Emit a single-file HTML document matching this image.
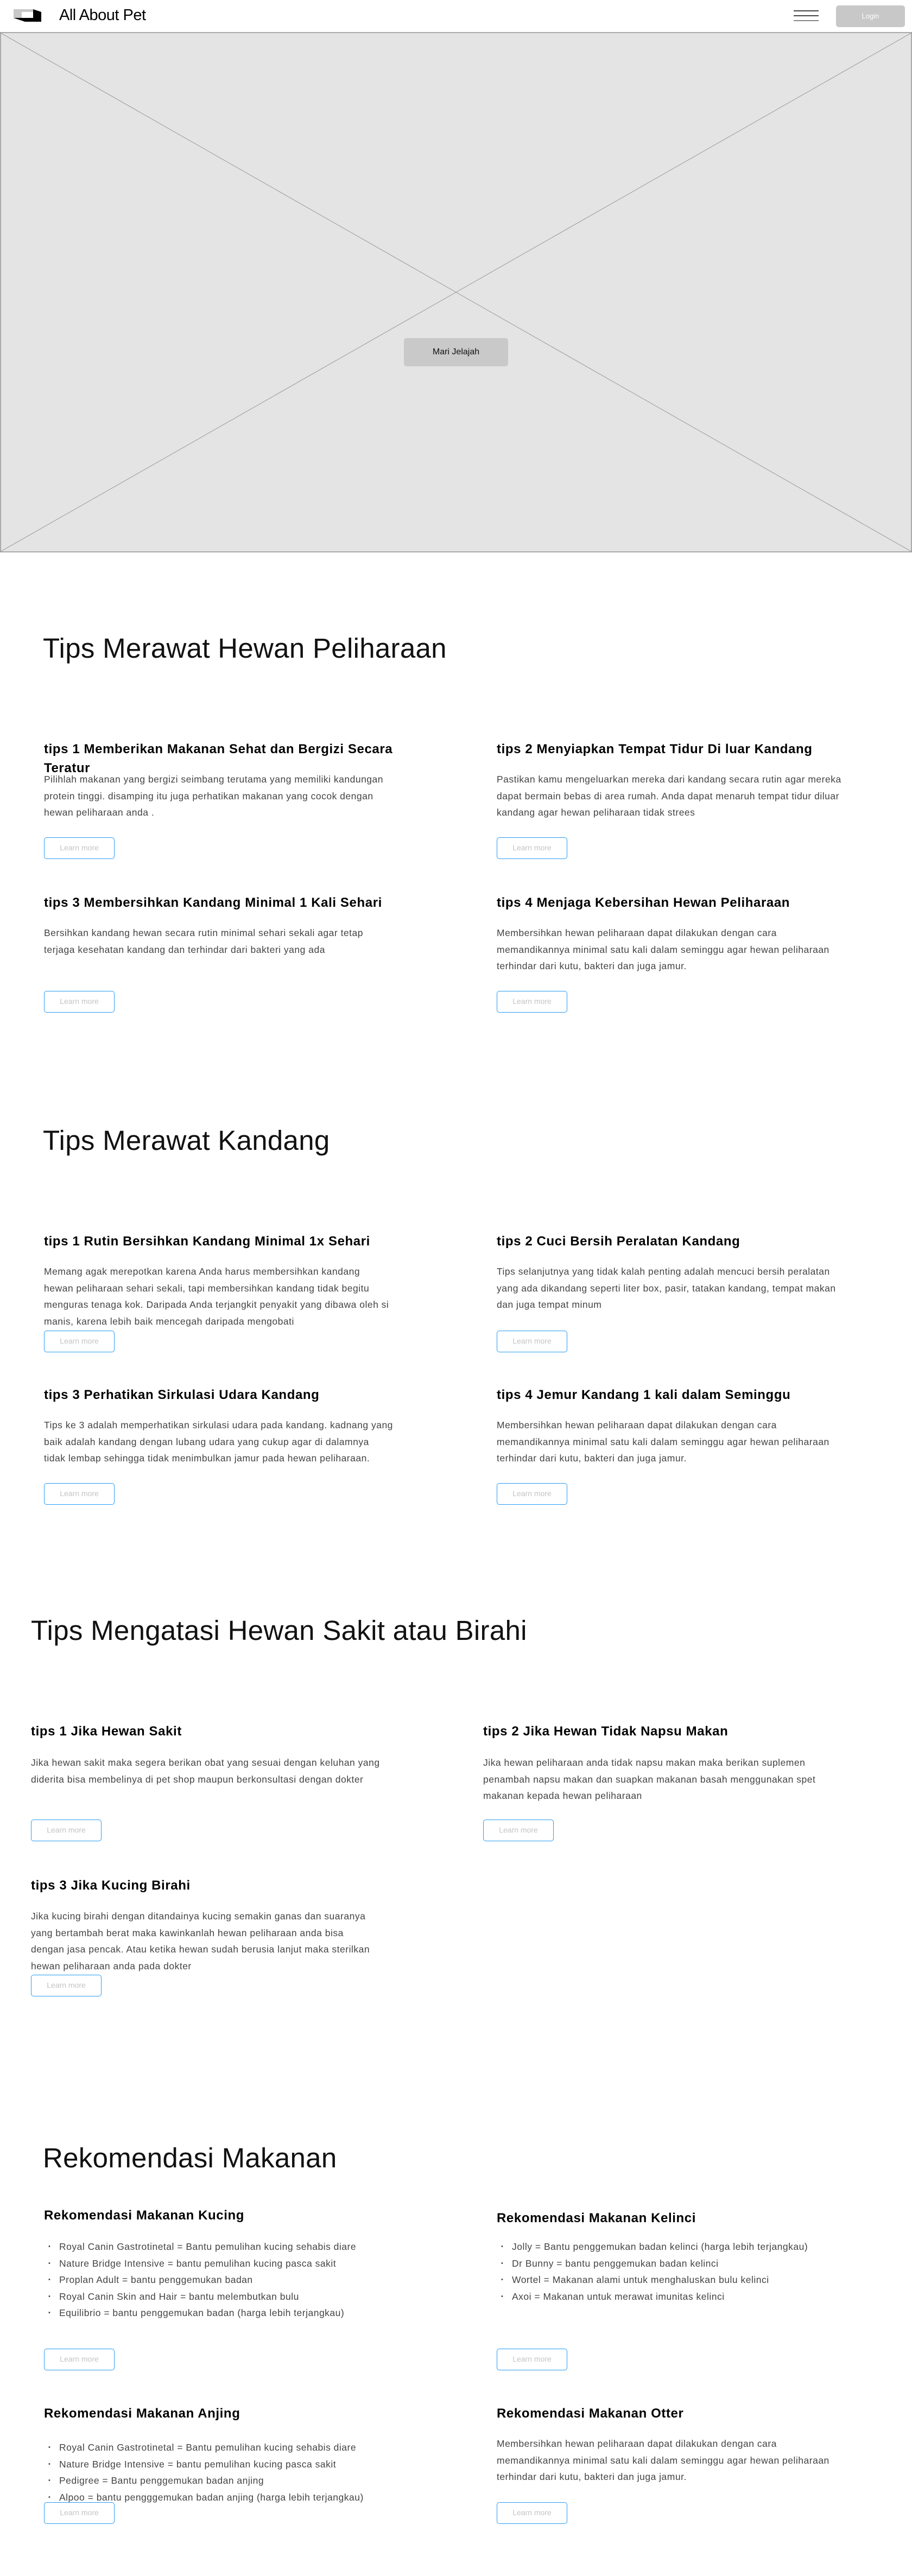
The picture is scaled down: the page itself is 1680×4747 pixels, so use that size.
<!DOCTYPE html>
<html><head><meta charset="utf-8"><style>
*{margin:0;padding:0;box-sizing:border-box}
body{width:1680px;height:4747px;position:relative;background:#fff;font-family:"Liberation Sans",sans-serif;overflow:hidden}
.a{position:absolute}
.t{position:absolute;font-size:51px;font-weight:300;color:#111;line-height:60px;white-space:nowrap;letter-spacing:0.3px}
.h{position:absolute;font-size:24px;font-weight:bold;color:#000;line-height:35px;white-space:nowrap;letter-spacing:0.6px}
.p{position:absolute;font-size:17.5px;color:#444;line-height:30.5px;white-space:nowrap;letter-spacing:0.5px}
.b{position:absolute;width:130px;height:40px;border:1.5px solid #2a9df4;border-radius:5px;color:#c4c4c4;font-size:14px;text-align:center;line-height:37px;background:#fff}
ul.p{list-style:none}
ul.p li{position:relative;padding-left:28px}
ul.p li:before{content:"•";position:absolute;left:8px;font-size:11px}
</style></head><body>
<!-- nav -->
<svg class="a" style="left:0;top:0" width="90" height="50">
<rect x="25" y="17" width="36" height="16" fill="#c8c8c8"/>
<rect x="40" y="22" width="21" height="11" fill="#fff"/>
<polygon points="25,33 61,33 61,17 76,22 76,40 46,40" fill="#000"/>
</svg>
<div class="a" style="left:109px;top:10px;font-size:29px;line-height:36px;color:#000;letter-spacing:-0.5px">All About Pet</div>
<div class="a" style="left:1462px;top:19px;width:46px;height:2px;background:#444"></div>
<div class="a" style="left:1462px;top:28px;width:46px;height:2px;background:#444"></div>
<div class="a" style="left:1462px;top:37px;width:46px;height:2px;background:#888"></div>
<div class="a" style="left:1540px;top:10px;width:127px;height:40px;background:#c8c8c8;border-radius:5px;color:#fff;font-size:13px;text-align:center;line-height:40px">Login</div>
<!-- hero -->
<div class="a" style="left:0;top:59px;width:1680px;height:959px;background:#e4e4e4;border:2px solid #aaa"></div>
<svg class="a" style="left:0;top:60px" width="1680" height="957"><line x1="0" y1="0" x2="1680" y2="957" stroke="#999" stroke-width="1"/><line x1="1680" y1="0" x2="0" y2="957" stroke="#999" stroke-width="1"/></svg>
<div class="a" style="left:744px;top:623px;width:192px;height:52px;background:#c9c9c9;border-radius:5px;font-size:16px;text-align:center;line-height:52px;color:#111">Mari Jelajah</div>

<!-- section 1 -->
<div class="t" style="left:79px;top:1165px">Tips Merawat Hewan Peliharaan</div>
<div class="h" style="left:81px;top:1363px">tips 1 Memberikan Makanan Sehat dan Bergizi Secara<br>Teratur</div>
<div class="p" style="left:81px;top:1421px">Pilihlah makanan yang bergizi seimbang terutama yang memiliki kandungan<br>protein tinggi. disamping itu juga perhatikan makanan yang cocok dengan<br>hewan peliharaan anda .</div>
<div class="b" style="left:81px;top:1543px">Learn more</div>
<div class="h" style="left:915px;top:1363px">tips 2 Menyiapkan Tempat Tidur Di luar Kandang</div>
<div class="p" style="left:915px;top:1421px">Pastikan kamu mengeluarkan mereka dari kandang secara rutin agar mereka<br>dapat bermain bebas di area rumah. Anda dapat menaruh tempat tidur diluar<br>kandang agar hewan peliharaan tidak strees</div>
<div class="b" style="left:915px;top:1543px">Learn more</div>
<div class="h" style="left:81px;top:1646px">tips 3 Membersihkan Kandang Minimal 1 Kali Sehari</div>
<div class="p" style="left:81px;top:1704px">Bersihkan kandang hewan secara rutin minimal sehari sekali agar tetap<br>terjaga kesehatan kandang dan terhindar dari bakteri yang ada</div>
<div class="b" style="left:81px;top:1826px">Learn more</div>
<div class="h" style="left:915px;top:1646px">tips 4 Menjaga Kebersihan Hewan Peliharaan</div>
<div class="p" style="left:915px;top:1704px">Membersihkan hewan peliharaan dapat dilakukan dengan cara<br>memandikannya minimal satu kali dalam seminggu agar hewan peliharaan<br>terhindar dari kutu, bakteri dan juga jamur.</div>
<div class="b" style="left:915px;top:1826px">Learn more</div>

<!-- section 2 -->
<div class="t" style="left:79px;top:2072px">Tips Merawat Kandang</div>
<div class="h" style="left:81px;top:2270px">tips 1 Rutin Bersihkan Kandang Minimal 1x Sehari</div>
<div class="p" style="left:81px;top:2328px">Memang agak merepotkan karena Anda harus membersihkan kandang<br>hewan peliharaan sehari sekali, tapi membersihkan kandang tidak begitu<br>menguras tenaga kok. Daripada Anda terjangkit penyakit yang dibawa oleh si<br>manis, karena lebih baik mencegah daripada mengobati</div>
<div class="b" style="left:81px;top:2452px">Learn more</div>
<div class="h" style="left:915px;top:2270px">tips 2 Cuci Bersih Peralatan Kandang</div>
<div class="p" style="left:915px;top:2328px">Tips selanjutnya yang tidak kalah penting adalah mencuci bersih peralatan<br>yang ada dikandang seperti liter box, pasir, tatakan kandang, tempat makan<br>dan juga tempat minum</div>
<div class="b" style="left:915px;top:2452px">Learn more</div>
<div class="h" style="left:81px;top:2553px">tips 3 Perhatikan Sirkulasi Udara Kandang</div>
<div class="p" style="left:81px;top:2611px">Tips ke 3 adalah memperhatikan sirkulasi udara pada kandang. kadnang yang<br>baik adalah kandang dengan lubang udara yang cukup agar di dalamnya<br>tidak lembap sehingga tidak menimbulkan jamur pada hewan peliharaan.</div>
<div class="b" style="left:81px;top:2733px">Learn more</div>
<div class="h" style="left:915px;top:2553px">tips 4 Jemur Kandang 1 kali dalam Seminggu</div>
<div class="p" style="left:915px;top:2611px">Membersihkan hewan peliharaan dapat dilakukan dengan cara<br>memandikannya minimal satu kali dalam seminggu agar hewan peliharaan<br>terhindar dari kutu, bakteri dan juga jamur.</div>
<div class="b" style="left:915px;top:2733px">Learn more</div>

<!-- section 3 -->
<div class="t" style="left:57px;top:2975px">Tips Mengatasi Hewan Sakit atau Birahi</div>
<div class="h" style="left:57px;top:3173px">tips 1 Jika Hewan Sakit</div>
<div class="p" style="left:57px;top:3233px">Jika hewan sakit maka segera berikan obat yang sesuai dengan keluhan yang<br>diderita bisa membelinya di pet shop maupun berkonsultasi dengan dokter</div>
<div class="b" style="left:57px;top:3353px">Learn more</div>
<div class="h" style="left:890px;top:3173px">tips 2 Jika Hewan Tidak Napsu Makan</div>
<div class="p" style="left:890px;top:3233px">Jika hewan peliharaan anda tidak napsu makan maka berikan suplemen<br>penambah napsu makan dan suapkan makanan basah menggunakan spet<br>makanan kepada hewan peliharaan</div>
<div class="b" style="left:890px;top:3353px">Learn more</div>
<div class="h" style="left:57px;top:3457px">tips 3 Jika Kucing Birahi</div>
<div class="p" style="left:57px;top:3516px">Jika kucing birahi dengan ditandainya kucing semakin ganas dan suaranya<br>yang bertambah berat maka kawinkanlah hewan peliharaan anda bisa<br>dengan jasa pencak. Atau ketika hewan sudah berusia lanjut maka sterilkan<br>hewan peliharaan anda pada dokter</div>
<div class="b" style="left:57px;top:3639px">Learn more</div>

<!-- section 4 -->
<div class="t" style="left:79px;top:3947px">Rekomendasi Makanan</div>
<div class="h" style="left:81px;top:4065px">Rekomendasi Makanan Kucing</div>
<ul class="p" style="left:81px;top:4125px"><li>Royal Canin Gastrotinetal = Bantu pemulihan kucing sehabis diare</li><li>Nature Bridge Intensive = bantu pemulihan kucing pasca sakit</li><li>Proplan Adult = bantu penggemukan badan</li><li>Royal Canin Skin and Hair = bantu melembutkan bulu</li><li>Equilibrio = bantu penggemukan badan (harga lebih terjangkau)</li></ul>
<div class="b" style="left:81px;top:4328px">Learn more</div>
<div class="h" style="left:915px;top:4070px">Rekomendasi Makanan Kelinci</div>
<ul class="p" style="left:915px;top:4125px"><li>Jolly = Bantu penggemukan badan kelinci (harga lebih terjangkau)</li><li>Dr Bunny = bantu penggemukan badan kelinci</li><li>Wortel = Makanan alami untuk menghaluskan bulu kelinci</li><li>Axoi = Makanan untuk merawat imunitas kelinci</li></ul>
<div class="b" style="left:915px;top:4328px">Learn more</div>
<div class="h" style="left:81px;top:4430px">Rekomendasi Makanan Anjing</div>
<ul class="p" style="left:81px;top:4495px"><li>Royal Canin Gastrotinetal = Bantu pemulihan kucing sehabis diare</li><li>Nature Bridge Intensive = bantu pemulihan kucing pasca sakit</li><li>Pedigree = Bantu penggemukan badan anjing</li><li>Alpoo = bantu pengggemukan badan anjing (harga lebih terjangkau)</li></ul>
<div class="b" style="left:81px;top:4611px">Learn more</div>
<div class="h" style="left:915px;top:4430px">Rekomendasi Makanan Otter</div>
<div class="p" style="left:915px;top:4488px">Membersihkan hewan peliharaan dapat dilakukan dengan cara<br>memandikannya minimal satu kali dalam seminggu agar hewan peliharaan<br>terhindar dari kutu, bakteri dan juga jamur.</div>
<div class="b" style="left:915px;top:4611px">Learn more</div>
</body></html>
